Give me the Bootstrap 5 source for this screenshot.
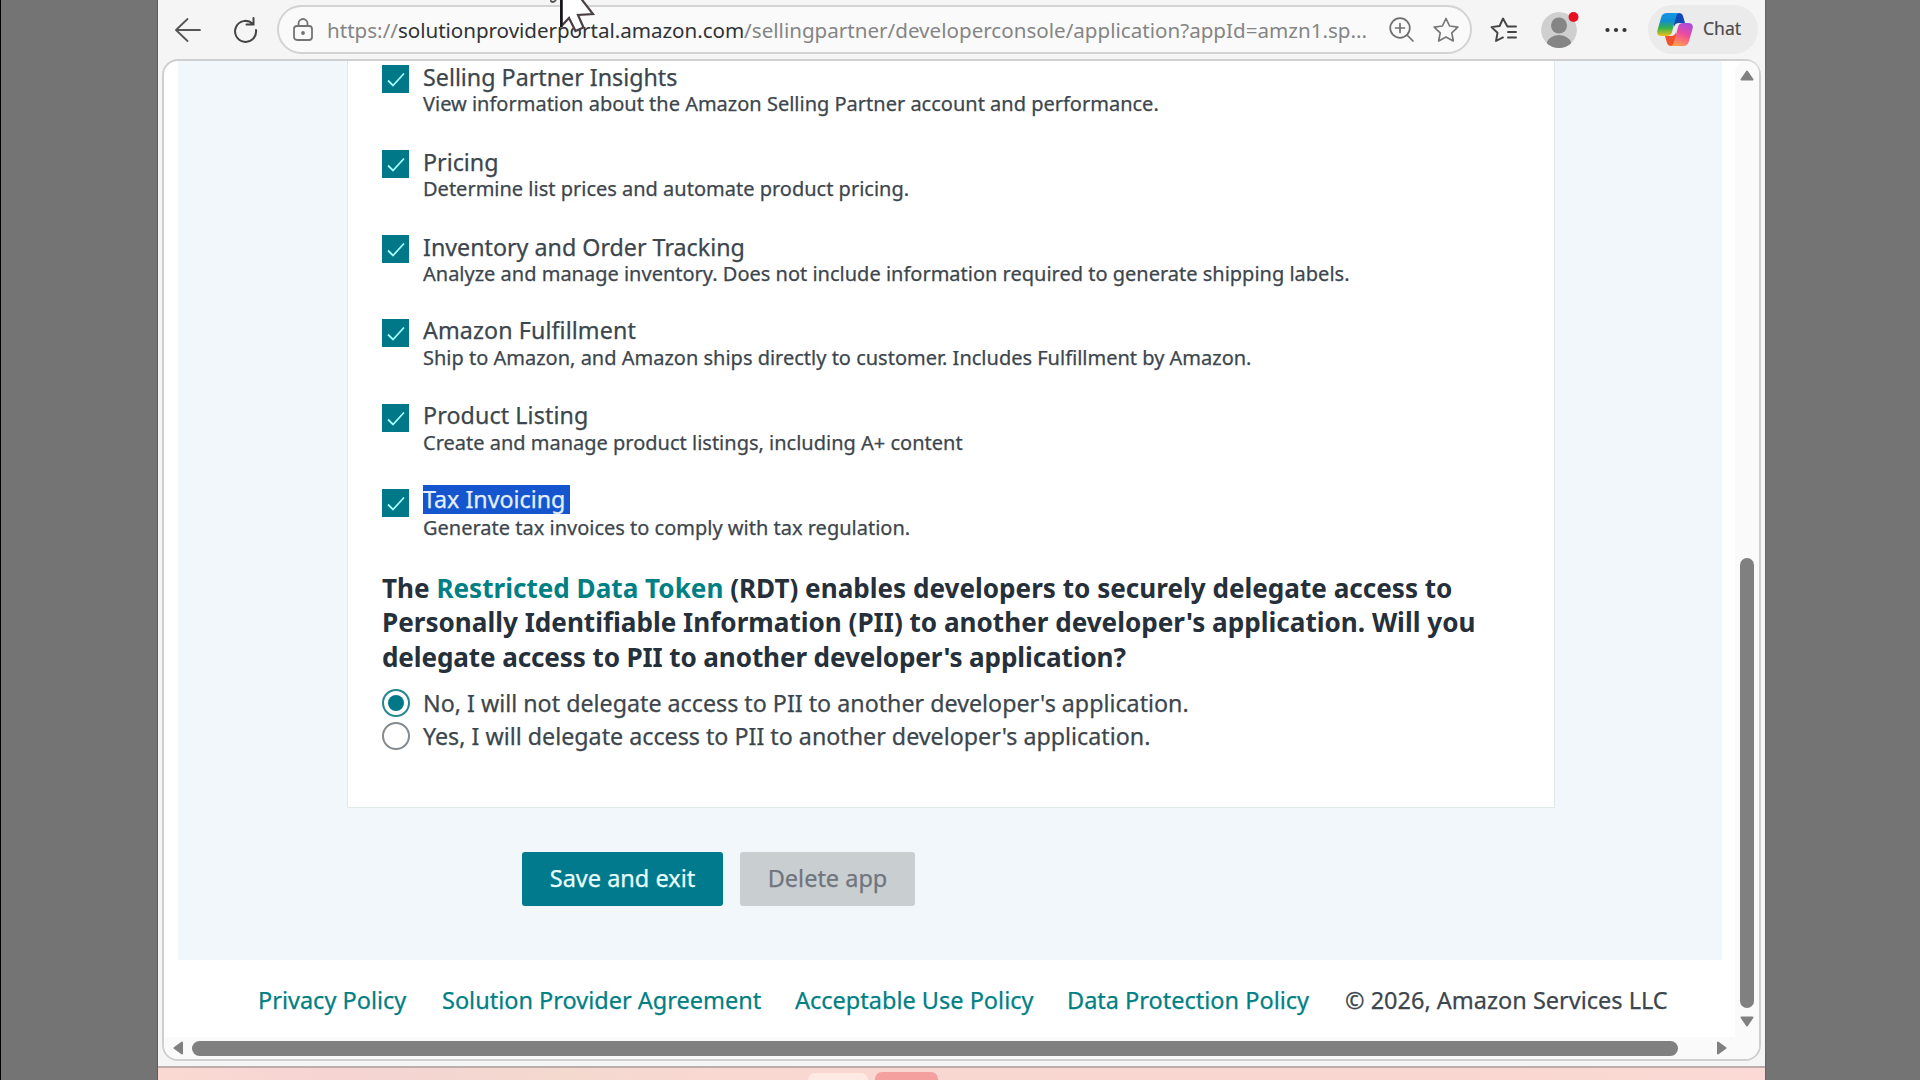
<!DOCTYPE html>
<html lang="en">
<head>
<meta charset="utf-8">
<title>Solution Provider Portal</title>
<link rel="stylesheet" href="https://cdn.jsdelivr.net/npm/bootstrap@5.3.0/dist/css/bootstrap.min.css">
<script src="https://cdn.jsdelivr.net/npm/bootstrap@5.3.0/dist/js/bootstrap.bundle.min.js"></script>
<style>
body{font-family:"Noto Sans","Open Sans",sans-serif;background:#747474;color:#3c464c;width:1920px;height:1080px;overflow:hidden;border-left:1px solid #000}
a{text-decoration:none;color:#007f84}
.stage{height:1080px;padding-left:156px}
.browser{width:1609px;background:#f5f5f5;border-left:1px solid #5c5c5c;border-right:1px solid #666}
.toolbar{height:59px;padding:5px 5px 0 17px}
.omnibox{width:1195px;height:49px;margin-left:10px;padding:0 11px 0 14px;background:#fafafa;border:2px solid #d3d3d3;border-radius:25px}
.url{width:1044px;margin-left:14px;font-size:20.6px;line-height:30px;color:#858585}
.url b{font-weight:400;color:#303236;letter-spacing:-.04px}
.chat-pill{width:110px;height:49px;margin-left:21px;padding-left:9px;border-radius:25px;background:#ebebeb;color:#4b4b4b;font-size:17.6px;-webkit-text-stroke:.2px}
.viewport{width:1599px;height:1002px;margin-left:4px;border:2px solid #cfcfcf;border-radius:16px;background:#fff;-webkit-text-stroke:.25px}
.panel{width:1544px;height:899px;margin-left:14px;background:#f1f7fa}
.sheet{width:1208px;height:747px;margin-left:169px;padding:1px 33px 0 34px;background:#fff;border:1px solid #e0e8e9;border-top:0}
.role{height:84.8px;padding-top:2px}
.role-text{margin-left:14px}
.role-name{font-size:23.25px;line-height:27px;margin-top:0}
.role-desc{font-size:20px;line-height:26px}
.role-raised .role-name{line-height:24px;padding-bottom:3px;letter-spacing:.1px}
.tick{width:27px;height:28px;margin-top:1px;background:#007888}
.role-raised .selected-text{background:#1556cf;color:#e4efff;margin:-3px 0 1px;height:29px;line-height:29px;padding:0;width:147px;letter-spacing:0}
.question{font-size:26.1px;line-height:34.6px;font-weight:700;color:#25303a;margin:0 0 11.500px;-webkit-text-stroke:0}
.question span{letter-spacing:-.12px}
.choice{height:33.4px;line-height:33.4px;font-size:23.25px}
.choice span{margin-left:14px;padding-top:.6px}
.dial{width:28px;height:28px;margin-top:3px;margin-right:-1px;border:2px solid #858b8f;border-radius:50%;background:#fff}
.dial-on{border-color:#23878f}
.dial-on::after{content:"";width:16px;height:16px;border-radius:50%;background:#007888}
.actions{margin:44px 0 0 344px;gap:17px}
.act{height:54px;border:0;border-radius:3px;font-size:23.5px;line-height:30px;padding:0 0 2px}
.act-save{width:201px;background:#007a8c!important;color:#e9ffff!important}
.act-delete{width:175px;background:#c9ced1!important;color:#70757e!important;opacity:1!important}
.foot{height:77px;padding:4px 0 0 94px;font-size:23.5px}
.vbar{width:24px;background:#fafafa;padding:9px 0 10px}
.hbar{height:22px;background:#fafafa;padding-left:9px;border-radius:0 0 14px 14px}
.vthumb{width:14px;height:450px;border-radius:7px;background:#808080}
.hthumb{width:1486px;height:15px;border-radius:8px;background:#808080;margin-left:9px}
.dock{margin-top:5px;height:14px;border-top:2px solid #bcaead;background:linear-gradient(90deg,#fbd9d2,#f5d4d2 11%,#f4d9cf 25%,#f9d8d2 36%,#f9d6cf 75%,#fbd9d4)}
.tab-a{width:60px;height:7px;margin-left:650px;border-radius:7px 7px 0 0;background:#fdeae5}
.tab-b{width:63px;height:8px;margin-left:7px;border-radius:7px 7px 0 0;background:#f4a09e}
.pointer{left:550px;top:0}
svg{flex:none;display:block}
</style>
</head>
<body>
<div class="stage d-flex">
<div class="browser d-flex flex-column">
  <header class="toolbar d-flex align-items-start">
    <div class="d-flex align-items-center" style="height:49px">
      <svg width="26" height="26" viewBox="0 0 26 26" fill="none" stroke="#555" stroke-width="1.8" stroke-linecap="round" stroke-linejoin="round"><path d="M25 13H1M12.500 2 1 13l11.500 11"/></svg>
      <svg class="ms-4" width="42" height="26" viewBox="-8 0 34 26" fill="none" stroke="#444" stroke-width="2" stroke-linecap="round"><path d="M19.500 6.500A10.500 10.500 0 1 0 23 13M20.500 1v6.500h-7" transform="translate(-4 0)"/></svg>
    </div>
    <div class="omnibox d-flex align-items-center">
      <svg width="20" height="24" viewBox="0 0 20 24" fill="none" stroke="#747474" stroke-width="1.800"><rect x="1" y="8" width="18" height="14" rx="3"/><path d="M5.500 8V5.500a4.500 4.500 0 0 1 9 0V8"/><circle cx="10" cy="15" r="1" fill="#555"/></svg>
      <div class="url text-nowrap">https://<b>solutionproviderportal.amazon.com</b>/sellingpartner/developerconsole/application?appId=amzn1.sp...</div>
      <svg style="margin-left:18px" width="25" height="25" viewBox="0 0 25 25" fill="none" stroke="#6f6f6f" stroke-width="1.700" stroke-linecap="round"><circle cx="11" cy="11" r="9.800"/><path d="m18 18 6 6M11 6.500v9M6.500 11h9"/></svg>
      <svg style="margin-left:19px" width="26" height="26" viewBox="0 0 26 26" fill="none" stroke="#777" stroke-width="1.700" stroke-linejoin="round"><path d="m13 1.500 3.600 7.500 8.200 1.100-6 5.700 1.500 8.200-7.300-4-7.300 4 1.500-8.200-6-5.700 8.200-1.100z"/></svg>
    </div>
    <div class="d-flex align-items-center" style="height:49px;margin-left:18px">
      <svg width="27" height="26" viewBox="0 0 27 26" fill="none" stroke="#444" stroke-width="1.900" stroke-linejoin="round" stroke-linecap="round"><path d="M17 8.800 13 1.500 9.600 9 1.500 10.100l6 5.700L6 24l7-3.600M17.500 9.500H26M18 15h8M18 20.500h8"/></svg>
      <svg style="margin-left:24px" width="38" height="40" viewBox="0 0 38 40"><defs><clipPath id="face"><circle cx="18" cy="20" r="18"/></clipPath></defs><g clip-path="url(#face)"><circle cx="18" cy="20" r="18" fill="#cfcfcf"/><circle cx="18" cy="15.500" r="8" fill="#858585"/><ellipse cx="18" cy="35" rx="12.500" ry="10" fill="#858585"/></g><circle cx="32.500" cy="7" r="5" fill="#e80f23"/></svg>
      <svg style="margin-left:26px" width="22" height="6" viewBox="0 0 22 6" fill="#333"><circle cx="2.500" cy="3" r="2.100"/><circle cx="11" cy="3" r="2.100"/><circle cx="19.500" cy="3" r="2.100"/></svg>
    </div>
    <div class="chat-pill d-flex align-items-center">
      <svg width="36" height="33" viewBox="0 0 36 33"><defs>
        <linearGradient id="ca" x1="0" y1="0" x2="0" y2="1"><stop offset="0" stop-color="#1596e8"/><stop offset=".35" stop-color="#0f8fd0"/><stop offset=".65" stop-color="#35b14c"/><stop offset="1" stop-color="#f0c01c"/></linearGradient>
        <linearGradient id="cb" x1=".8" y1="0" x2=".4" y2="1"><stop offset="0" stop-color="#a64ae0"/><stop offset=".5" stop-color="#f04d9b"/><stop offset="1" stop-color="#ff9a4d"/></linearGradient></defs>
        <path d="M17 0h5q3 0 4 3l2 7h-6q-4 0-5 4z" fill="#1248b5"/>
        <path d="M19 33h-5q-3 0-4-3l-2-7h6q4 0 5-4z" fill="#f0522d"/>
        <path d="M10 0h13q-3 0-4 4l-4 15q-1 4-5 4H5q-6 0-4.500-6L4 5q1-5 6-5z" fill="url(#ca)"/>
        <path d="M26 33H13q3 0 4-4l4-15q1-4 5-4h5q6 0 4.500 6L32 28q-1 5-6 5z" fill="url(#cb)"/></svg>
      <span style="margin-left:10px;margin-top:-2px">Chat</span>
    </div>
  </header>

  <div class="viewport d-flex flex-column">
    <div class="d-flex justify-content-between">
      <main>
        <div class="panel">
          <section class="sheet">
            <div class="role d-flex"><div class="tick"><svg width="27" height="28" viewBox="0 0 27 28" fill="none" stroke="#a5ffff" stroke-width="1.800"><path d="m6 15.500 5 5L22 8.500"/></svg></div><div class="role-text"><div class="role-name">Selling Partner Insights</div><div class="role-desc">View information about the Amazon Selling Partner account and performance.</div></div></div>
            <div class="role d-flex"><div class="tick"><svg width="27" height="28" viewBox="0 0 27 28" fill="none" stroke="#a5ffff" stroke-width="1.800"><path d="m6 15.500 5 5L22 8.500"/></svg></div><div class="role-text"><div class="role-name">Pricing</div><div class="role-desc">Determine list prices and automate product pricing.</div></div></div>
            <div class="role d-flex"><div class="tick"><svg width="27" height="28" viewBox="0 0 27 28" fill="none" stroke="#a5ffff" stroke-width="1.800"><path d="m6 15.500 5 5L22 8.500"/></svg></div><div class="role-text"><div class="role-name">Inventory and Order Tracking</div><div class="role-desc">Analyze and manage inventory. Does not include information required to generate shipping labels.</div></div></div>
            <div class="role role-raised d-flex"><div class="tick"><svg width="27" height="28" viewBox="0 0 27 28" fill="none" stroke="#a5ffff" stroke-width="1.800"><path d="m6 15.500 5 5L22 8.500"/></svg></div><div class="role-text"><div class="role-name">Amazon Fulfillment</div><div class="role-desc">Ship to Amazon, and Amazon ships directly to customer. Includes Fulfillment by Amazon.</div></div></div>
            <div class="role role-raised d-flex"><div class="tick"><svg width="27" height="28" viewBox="0 0 27 28" fill="none" stroke="#a5ffff" stroke-width="1.800"><path d="m6 15.500 5 5L22 8.500"/></svg></div><div class="role-text"><div class="role-name">Product Listing</div><div class="role-desc">Create and manage product listings, including A+ content</div></div></div>
            <div class="role role-raised d-flex"><div class="tick"><svg width="27" height="28" viewBox="0 0 27 28" fill="none" stroke="#a5ffff" stroke-width="1.800"><path d="m6 15.500 5 5L22 8.500"/></svg></div><div class="role-text"><div class="role-name selected-text text-nowrap">Tax Invoicing</div><div class="role-desc">Generate tax invoices to comply with tax regulation.</div></div></div>
            <h2 class="question text-nowrap">The <a href="#">Restricted Data Token</a> (RDT) enables developers to securely delegate access to<br>Personally Identifiable Information (PII) to another developer's application. Will you<br><span>delegate access to PII to another developer's application?</span></h2>
            <div class="choice d-flex"><i class="dial dial-on d-flex align-items-center justify-content-center"></i><span>No, I will not delegate access to PII to another developer's application.</span></div>
            <div class="choice d-flex"><i class="dial"></i><span>Yes, I will delegate access to PII to another developer's application.</span></div>
          </section>
          <div class="actions d-flex">
            <button class="btn act act-save">Save and exit</button>
            <button class="btn act act-delete" disabled>Delete app</button>
          </div>
        </div>
        <footer class="foot d-flex align-items-center text-nowrap">
          <a href="#" style="width:184px">Privacy Policy</a>
          <a href="#" style="width:353px">Solution Provider Agreement</a>
          <a href="#" style="width:272px">Acceptable Use Policy</a>
          <a href="#" style="width:278px">Data Protection Policy</a>
          <span>© 2026, Amazon Services LLC</span>
        </footer>
      </main>
      <div class="vbar d-flex flex-column align-items-center rounded-top-4">
        <svg width="14" height="11" viewBox="0 0 14 11"><path d="M7 1.500 12.500 9.500H1.500z" fill="#808080" stroke="#808080" stroke-width="2" stroke-linejoin="round"/></svg>
        <div class="vthumb mt-auto"></div>
        <svg class="mt-2" width="14" height="11" viewBox="0 0 14 11"><path d="M7 9.500 12.500 1.500H1.500z" fill="#808080" stroke="#808080" stroke-width="2" stroke-linejoin="round"/></svg>
      </div>
    </div>
    <div class="hbar d-flex align-items-center">
      <svg width="10" height="14" viewBox="0 0 10 14"><path d="M1.500 7 9 12.500v-11z" fill="#808080" stroke="#808080" stroke-width="2" stroke-linejoin="round"/></svg>
      <div class="hthumb"></div>
      <svg style="margin-left:39px" width="10" height="14" viewBox="0 0 10 14"><path d="M8.500 7 1 12.500v-11z" fill="#808080" stroke="#808080" stroke-width="2" stroke-linejoin="round"/></svg>
    </div>
  </div>
  <div class="dock d-flex align-items-end"><div class="tab-a"></div><div class="tab-b"></div></div>
</div>
</div>
<svg class="pointer position-absolute" width="50" height="36" viewBox="0 0 50 36"><path d="M0 0q3 4 6 0" fill="none" stroke="#555" stroke-width="1.800"/><path d="M11.500-4v30l7.500-8 6.500 13 8-3.500-5.500-12.500 15-1L29-4z" fill="#fff" stroke="#4a3f43" stroke-width="2.200"/><path d="M11.300 0v27" stroke="#15161a" stroke-width="2.500"/></svg>
</body>
</html>
